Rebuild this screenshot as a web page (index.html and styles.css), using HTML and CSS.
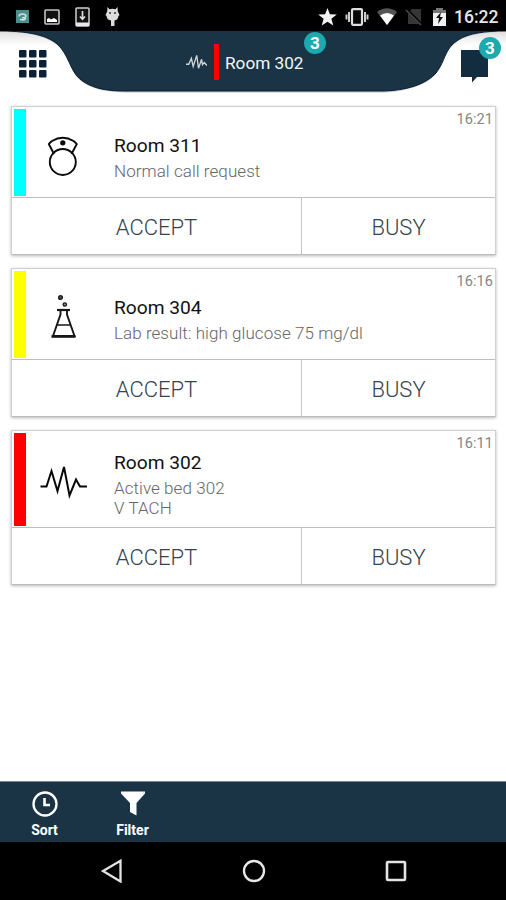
FILE: index.html
```html
<!DOCTYPE html>
<html lang="en">
<head>
<meta charset="utf-8">
<title>Room calls</title>
<link rel="stylesheet" href="styles.css">
</head>
<body>
<div class="phone">
  <div class="status">
    <div class="status-left">
      <svg width="13" height="13" viewBox="0 0 13 13"><rect width="13" height="13" fill="#4b8f8c"/><path d="M3 6.5Q3 4 6.5 4T10 6.3Q9.500 8 6 7.700M4 9.200Q8 11 10 8" fill="none" stroke="#c9e2e0" stroke-width="1.500"/></svg>
      <svg width="16" height="16" viewBox="0 0 16 16"><rect x="1" y="1" width="14" height="14" rx="1" fill="#111" stroke="#c4c4c4" stroke-width="1.600"/><path d="M3 13V10l2-1 2 1.500L10 9l3 2v2z" fill="#fff"/></svg>
      <svg width="15" height="20" viewBox="0 0 15 20"><rect x="1" y="1" width="13" height="18" rx="1" fill="#111" stroke="#d0d0d0" stroke-width="1.500"/><path d="M1 15.500h13V19H1z" fill="#e8e8e8"/><path d="M7.500 4v8M5 9.500l2.500 2.800L10 9.500" fill="none" stroke="#ddd" stroke-width="1.700"/></svg>
      <svg width="15" height="21" viewBox="0 0 15 21"><path d="M2.500 1l2 2.200q3-1 6 0l2-2.200.3 4.500L14.500 9l-1 1q-.5 4-4 4.500V20h-3.500v-5.500Q2 14 1.500 10l-1-1 1.700-3.500z" fill="#ddd"/><circle cx="5" cy="7" r=".9" fill="#222"/><circle cx="10" cy="7" r=".9" fill="#222"/></svg>
    </div>
    <div class="status-right">
      <svg width="19" height="18" viewBox="0 0 19 18"><path d="M9.500 0l2.400 6.300 6.900.3-5.400 4.200 1.900 6.700-5.800-3.800-5.800 3.800 1.900-6.700L.2 6.600l6.900-.3z" fill="#f2f2f2"/></svg>
      <svg width="24" height="18" viewBox="0 0 24 18"><rect x="7" y="1.200" width="10" height="15.600" rx="1" fill="#050505" stroke="#ddd" stroke-width="2.200"/><path d="M4 4v10M20 4v10M1.500 6.500v5M22.500 6.500v5" stroke="#ccc" stroke-width="2"/></svg>
      <svg width="20" height="17" viewBox="0 0 20 17"><path d="M0 4Q10-3.500 20 4L10 17z" fill="#555"/><path d="M3 7.500Q10 2.500 17 7.500L10 17z" fill="#fff"/></svg>
      <svg width="18" height="18" viewBox="0 0 18 18"><path d="M7 1h9v15H3V5z" fill="#363636"/><path d="M1 1l16 16" stroke="#000" stroke-width="3"/><path d="M1 2l15 15" stroke="#4b4b4b" stroke-width="1.500"/></svg>
      <svg class="battery" width="13" height="18" viewBox="0 0 13 18"><path d="M3.500 0h6v2H13v16H0V2h3.500z" fill="#f2f2f2"/><path d="M0 2h3.500V0h6v2H13v3H0z" fill="#777"/><path d="M8 4L3 10h3l-1 6 5-7H7z" fill="#111"/></svg>
      <span class="clock">16:22</span>
    </div>
  </div>

  <header class="header">
    <svg class="curve" width="506" height="65" viewBox="0 0 506 65">
      <defs><linearGradient id="shade" x1="0" y1="0" x2="0" y2="1"><stop offset="0" stop-color="#dedede"/><stop offset=".22" stop-color="#fff"/></linearGradient></defs>
      <rect width="506" height="65" fill="url(#shade)"/>
      <path d="M0 0C34 0 52 6 61 17C71 30 71 43 84 51C95 58 108 60 125 60.500H384C412 59 428 51 436 42C446 29 444 18 458 9C469 2 485 0 506 0z" fill="#bfc5c8" transform="translate(0 1)"/>
      <path d="M0 0C34 0 52 6 61 17C71 30 71 43 84 51C95 58 108 60 125 60H384C412 59 428 51 436 42C446 29 444 18 458 9C469 2 485 0 506 0" fill="#1b3445" stroke="#0b1d36" stroke-width="1"/>
    </svg>
    <svg class="grid-icon" width="28" height="28" viewBox="0 0 28 28" fill="#0b2138"><rect width="7.500" height="7.500" rx="1"/><rect x="10" width="7.500" height="7.500" rx="1"/><rect x="20" width="7.500" height="7.500" rx="1"/><rect y="10" width="7.500" height="7.500" rx="1"/><rect x="10" y="10" width="7.500" height="7.500" rx="1"/><rect x="20" y="10" width="7.500" height="7.500" rx="1"/><rect y="20" width="7.500" height="7.500" rx="1"/><rect x="10" y="20" width="7.500" height="7.500" rx="1"/><rect x="20" y="20" width="7.500" height="7.500" rx="1"/></svg>
    <div class="current">
      <svg width="21" height="16" viewBox="0 0 47 36"><path d="M0 23h6l6-13 4 18 8-25 4 29 7-20 2 12 4-5 6 7" fill="none" stroke="#cfd7dc" stroke-width="3"/></svg>
      <span class="current-bar"></span>
      <span class="current-name">Room 302</span>
      <span class="badge badge-room">3</span>
    </div>
    <div class="messages">
      <svg width="27" height="33" viewBox="0 0 27 33"><path d="M0 0h27v27H16l-5 5.500V27H0z" fill="#122c40"/></svg>
      <span class="badge badge-msg">3</span>
    </div>
  </header>

  <main class="list">
    <article class="card">
      <div class="info">
        <span class="strip cyan"></span>
        <div class="icon"><svg width="48" height="48" viewBox="0 0 48 48" fill="none" stroke="#0a0a0a" stroke-width="1.900"><circle cx="22.800" cy="31" r="13"/><path d="M14 23L8.800 13Q10 11.500 12 10Q22.800 3.500 33.500 10Q35.500 11.500 36.800 13L31.500 23" stroke-linejoin="round"/><circle cx="22.800" cy="11.800" r="1.700" fill="#0a0a0a"/></svg></div>
        <div class="text"><h2>Room 311</h2><p>Normal call request</p></div>
        <time>16:21</time>
      </div>
      <div class="actions"><button class="accept">ACCEPT</button><button class="busy">BUSY</button></div>
    </article>
    <article class="card">
      <div class="info">
        <span class="strip yellow"></span>
        <div class="icon"><svg width="48" height="48" viewBox="0 0 48 48" fill="none" stroke="#161616"><path d="M17 17h13" stroke-width="2.200"/><path d="M20.500 17v4.500L13 43h21.500L27 21.500V17" stroke-width="1.900"/><path d="M11.500 43.500h24" stroke-width="2.600"/><path d="M17 32h13" stroke-width="1.500"/><circle cx="20.500" cy="4.500" r="1.900" fill="#555" stroke-width="1.300"/><circle cx="24.800" cy="11.500" r="1.700" fill="#888" stroke-width="1.300"/></svg></div>
        <div class="text"><h2>Room 304</h2><p>Lab result: high glucose 75 mg/dl</p></div>
        <time>16:16</time>
      </div>
      <div class="actions"><button class="accept">ACCEPT</button><button class="busy">BUSY</button></div>
    </article>
    <article class="card tall">
      <div class="info">
        <span class="strip red"></span>
        <div class="icon"><svg width="48" height="48" viewBox="0 0 48 48"><path d="M.5 27.500h6l5-15.500 6 20L24 8l5.500 28.500L36 20.500l4 7h7" fill="none" stroke="#080808" stroke-width="2"/></svg></div>
        <div class="text"><h2>Room 302</h2><p>Active bed 302<br>V TACH</p></div>
        <time>16:11</time>
      </div>
      <div class="actions"><button class="accept">ACCEPT</button><button class="busy">BUSY</button></div>
    </article>
  </main>

  <footer class="tools">
    <div class="tool"><svg width="28" height="28" viewBox="0 0 28 28" fill="none" stroke="#fff"><circle cx="14" cy="14" r="11.500" stroke-width="2.300"/><path d="M13.500 8v7H19" stroke-width="2.600"/></svg><span>Sort</span></div>
    <div class="tool"><svg width="28" height="28" viewBox="0 0 28 28"><path d="M2 1.500h24v2L17.500 13v12.500L11 22v-9L2 3.500z" fill="#fff"/></svg><span>Filter</span></div>
  </footer>
  <nav class="nav">
    <svg width="24" height="24" viewBox="0 0 24 24"><path d="M20.500 1.800v20.700L3 12z" fill="none" stroke="#e4e4e4" stroke-width="2.300"/></svg>
    <svg width="24" height="24" viewBox="0 0 24 24"><circle cx="12" cy="12" r="10" fill="none" stroke="#e8e8e8" stroke-width="2.300"/></svg>
    <svg width="24" height="24" viewBox="0 0 24 24"><rect x="3" y="3" width="18" height="18" rx="1" fill="none" stroke="#e4e4e4" stroke-width="2.600"/></svg>
  </nav>
</div>
</body>
</html>
```
FILE: styles.css
```css
* { box-sizing: border-box; }
body { margin: 0; background: #fff; font-family: Roboto, sans-serif; }
svg { display: block; flex: none; }
.phone { width: 506px; height: 900px; display: flex; flex-direction: column; overflow: hidden; }

.status { height: 31px; flex: none; background: #000; display: flex; justify-content: space-between; align-items: center; padding: 2px 9px 0 16px; }
.status-left { display: flex; align-items: center; gap: 15px; }
.status-right { display: flex; align-items: center; gap: 8px; margin-right: -1px; }
.battery { margin-left: 2px; }
.clock { color: #e6e6e6; font-size: 17.500px; font-weight: 500; line-height: 20px; width: 44px; white-space: nowrap; }

.header { height: 65px; flex: none; position: relative; display: flex; align-items: flex-start; }
.curve { position: absolute; left: 0; top: 0; }
.grid-icon { position: relative; margin: 19px 0 0 19px; }
.current { position: relative; display: flex; align-items: center; height: 36px; margin: 13px 0 0 139px; }
.current-bar { width: 5px; height: 36px; margin: 0 6px 0 7px; background: #f00; }
.current-name { color: #f4f7f9; font-size: 17.200px; width: 80px; padding-top: 2px; white-space: nowrap; }
.badge { position: absolute; width: 22px; height: 22px; border-radius: 50%; background: #1baaaf; color: #fff; font-size: 17px; font-weight: 700; line-height: 22px; text-align: center; }
.badge-room { right: -21px; top: -12px; }
.messages { position: relative; margin: 19px 0 0 156px; }
.badge-msg { left: 18px; top: -13px; }

.list { flex: 1; padding: 10px 10px 0 11px; display: flex; flex-direction: column; gap: 13px; }
.card { border: 1px solid #d0d0d0; border-bottom-color: #bdbdbd; box-shadow: 0 1px 3px rgba(0,0,0,.28); background: #fff; height: 149px; display: flex; flex-direction: column; }
.card.tall { height: 155px; }
.info { flex: 1; display: flex; align-items: center; position: relative; }
.strip { align-self: stretch; width: 12px; margin: 2px 0 1px 2px; }
.cyan { background: #0ff; }
.yellow { background: #ff0; }
.red { background: #f00; }
.icon { margin-left: 14px; width: 48px; padding-top: 6px; }
.tall .icon { padding-top: 7px; }
.text { margin-left: 26px; padding-top: 10px; }
h2 { margin: 0; font-size: 19.200px; font-weight: 400; line-height: 24px; color: #111; }
p { margin: 0; padding-top: 2px; font-size: 17px; font-weight: 300; line-height: 20px; letter-spacing: .06px; color: #666; white-space: nowrap; }
.info p { position: relative; top: .5px; }
time { position: absolute; right: 2px; top: 3px; font-size: 14.500px; line-height: 19px; letter-spacing: .1px; color: #858585; }
.actions { height: 57px; flex: none; border-top: 1px solid #bdbdbd; display: flex; }
button { font-family: inherit; font-weight: 300; font-size: 22px; letter-spacing: 0; color: #34444e; background: none; border: 0; padding: 3px 0 0; }
.accept { width: 290px; border-right: 1px solid #c4c4c4; }
.busy { flex: 1; }

.tools { height: 61px; flex: none; background: #1b3445; border-top: 1px solid #7c898d; display: flex; padding: 8px 0 0; }
.tool { width: 89px; display: flex; flex-direction: column; align-items: center; color: #fff; font-size: 14px; font-weight: 700; line-height: 18px; gap: 3px; }
.tool + .tool { width: 87px; }
.nav { height: 58px; flex: none; background: #000; display: flex; align-items: center; justify-content: center; gap: 118px; padding-left: 2px; }
```
